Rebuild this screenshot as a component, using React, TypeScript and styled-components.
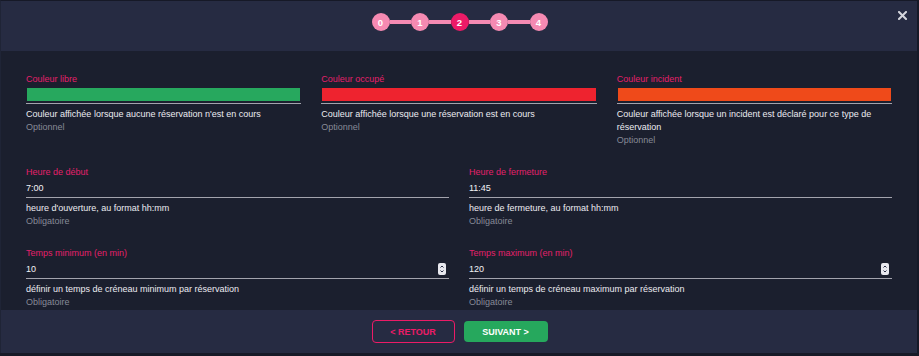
import React from "react";
import styled, { createGlobalStyle } from "styled-components";

const Global = createGlobalStyle`
  html, body { margin: 0; padding: 0; background: #171a27; }
  body { font-family: "Liberation Sans", Arial, sans-serif; }
  * { box-sizing: border-box; }
`;

const Modal = styled.div`
  width: 919px;
  height: 353px;
  display: flex;
  flex-direction: column;
  background: #1b1f2e;
  border-top: 1px solid #161927;
  border-right: 2px solid #161927;
  border-left: 1px solid #1f2436;
  overflow: hidden;
`;

const Header = styled.div`
  height: 50px;
  flex: none;
  background: #262b42;
  display: grid;
  grid-template-columns: 1fr auto 1fr;
  align-items: start;
  padding-top: 12px;
`;

const Stepper = styled.div`
  grid-column: 2;
  display: flex;
  align-items: center;
  margin-left: 1px;
`;

const Step = styled.div<{ $active?: boolean }>`
  width: 18px;
  height: 18px;
  border-radius: 50%;
  background: ${(p) => (p.$active ? "#ec1b67" : "#f58ab2")};
  color: #fff;
  font-size: 9.5px;
  font-weight: 700;
  display: flex;
  align-items: center;
  justify-content: center;
  flex: none;
`;

const Connector = styled.div`
  width: 21.5px;
  height: 4px;
  background: #f58ab2;
  flex: none;
`;

const CloseButton = styled.button`
  grid-column: 3;
  justify-self: end;
  margin: -4px 8px 0 0;
  width: 13px;
  height: 13px;
  padding: 2px;
  border: none;
  background: transparent;
  display: flex;
  cursor: pointer;
`;

const Body = styled.div`
  height: 259px;
  flex: none;
  padding: 22px 25px 0 25px;
  display: flex;
  flex-direction: column;
  gap: 19.5px;
  overflow: hidden;
`;

const Row = styled.div<{ $cols: number }>`
  display: grid;
  grid-template-columns: repeat(${(p) => p.$cols}, 1fr);
  column-gap: 20px;
  align-items: start;
`;

const Field = styled.div`
  display: flex;
  flex-direction: column;
  min-width: 0;
`;

const Label = styled.div`
  color: #e4206b;
  font-size: 9px;
  line-height: 12px;
  white-space: nowrap;
`;

const SwatchBox = styled.div`
  padding: 3px 1px 2px 1px;
  border-bottom: 1px solid #a3a3ad;
`;

const Swatch = styled.div<{ $color: string }>`
  height: 13px;
  background: ${(p) => p.$color};
`;

const InputBox = styled.div`
  margin-top: 3px;
  height: 17px;
  padding-bottom: 2px;
  border-bottom: 1px solid #a3a3ad;
  display: flex;
  align-items: center;
  justify-content: space-between;
`;

const Value = styled.span`
  color: #f2f2f5;
  font-size: 9px;
  line-height: 14px;
`;

const Spinner = styled.div`
  width: 8px;
  height: 12px;
  margin-right: 3px;
  border-radius: 2px;
  background: #e8e8ee;
  display: flex;
  align-items: center;
  justify-content: center;
`;

const Help = styled.div`
  margin-top: 3.5px;
  color: #ececf1;
  font-size: 9px;
  line-height: 13px;
`;

const Sub = styled.div`
  color: #878a97;
  font-size: 9px;
  line-height: 13px;
`;

const Footer = styled.div`
  flex: 1;
  background: #262b42;
  display: flex;
  align-items: center;
  justify-content: center;
  gap: 9px;
  padding-left: 1px;
`;

const Button = styled.button<{ $primary?: boolean }>`
  height: ${(p) => (p.$primary ? "21px" : "23px")};
  width: ${(p) => (p.$primary ? "84px" : "83px")};
  border-radius: 4px;
  border: ${(p) => (p.$primary ? "none" : "1px solid #ec1b67")};
  background: ${(p) => (p.$primary ? "#26a85d" : "transparent")};
  color: ${(p) => (p.$primary ? "#ffffff" : "#ec1b67")};
  font-family: "Liberation Sans", Arial, sans-serif;
  font-size: 9px;
  font-weight: 700;
  display: flex;
  align-items: center;
  justify-content: center;
  padding: 0;
  cursor: pointer;
`;

const SpinIcon = () => (
  <svg width="6" height="10" viewBox="0 0 6 10">
    <path d="M1.5 3.5 L3 2 L4.5 3.5" stroke="#262b42" strokeWidth="1" fill="none" />
    <path d="M1.5 6.5 L3 8 L4.5 6.5" stroke="#262b42" strokeWidth="1" fill="none" />
  </svg>
);

const colors = [
  { label: "Couleur libre", color: "#27a85e", help: "Couleur affichée lorsque aucune réservation n'est en cours" },
  { label: "Couleur occupé", color: "#ee232f", help: "Couleur affichée lorsque une réservation est en cours" },
  { label: "Couleur incident", color: "#ef4a1a", help: "Couleur affichée lorsque un incident est déclaré pour ce type de réservation" },
];

const hours = [
  { label: "Heure de début", value: "7:00", help: "heure d'ouverture, au format hh:mm" },
  { label: "Heure de fermeture", value: "11:45", help: "heure de fermeture, au format hh:mm" },
];

const times = [
  { label: "Temps minimum (en min)", value: "10", help: "définir un temps de créneau minimum par réservation" },
  { label: "Temps maximum (en min)", value: "120", help: "définir un temps de créneau maximum par réservation" },
];

export default function App() {
  const steps = [0, 1, 2, 3, 4];
  return (
    <>
      <Global />
      <Modal>
        <Header>
          <Stepper>
            {steps.map((s, i) => (
              <React.Fragment key={s}>
                {i > 0 && <Connector />}
                <Step $active={s === 2}>{s}</Step>
              </React.Fragment>
            ))}
          </Stepper>
          <CloseButton aria-label="Fermer">
            <svg width="9" height="9" viewBox="0 0 9 9">
              <path d="M1 1 L8 8 M8 1 L1 8" stroke="#d4d5dc" strokeWidth="2" strokeLinecap="square" />
            </svg>
          </CloseButton>
        </Header>
        <Body>
          <Row $cols={3}>
            {colors.map((c) => (
              <Field key={c.label}>
                <Label>{c.label}</Label>
                <SwatchBox>
                  <Swatch $color={c.color} />
                </SwatchBox>
                <Help>{c.help}</Help>
                <Sub>Optionnel</Sub>
              </Field>
            ))}
          </Row>
          <Row $cols={2}>
            {hours.map((h) => (
              <Field key={h.label}>
                <Label>{h.label}</Label>
                <InputBox>
                  <Value>{h.value}</Value>
                </InputBox>
                <Help>{h.help}</Help>
                <Sub>Obligatoire</Sub>
              </Field>
            ))}
          </Row>
          <Row $cols={2}>
            {times.map((t) => (
              <Field key={t.label}>
                <Label>{t.label}</Label>
                <InputBox>
                  <Value>{t.value}</Value>
                  <Spinner>
                    <SpinIcon />
                  </Spinner>
                </InputBox>
                <Help>{t.help}</Help>
                <Sub>Obligatoire</Sub>
              </Field>
            ))}
          </Row>
        </Body>
        <Footer>
          <Button>&lt; RETOUR</Button>
          <Button $primary>SUIVANT &gt;</Button>
        </Footer>
      </Modal>
    </>
  );
}
